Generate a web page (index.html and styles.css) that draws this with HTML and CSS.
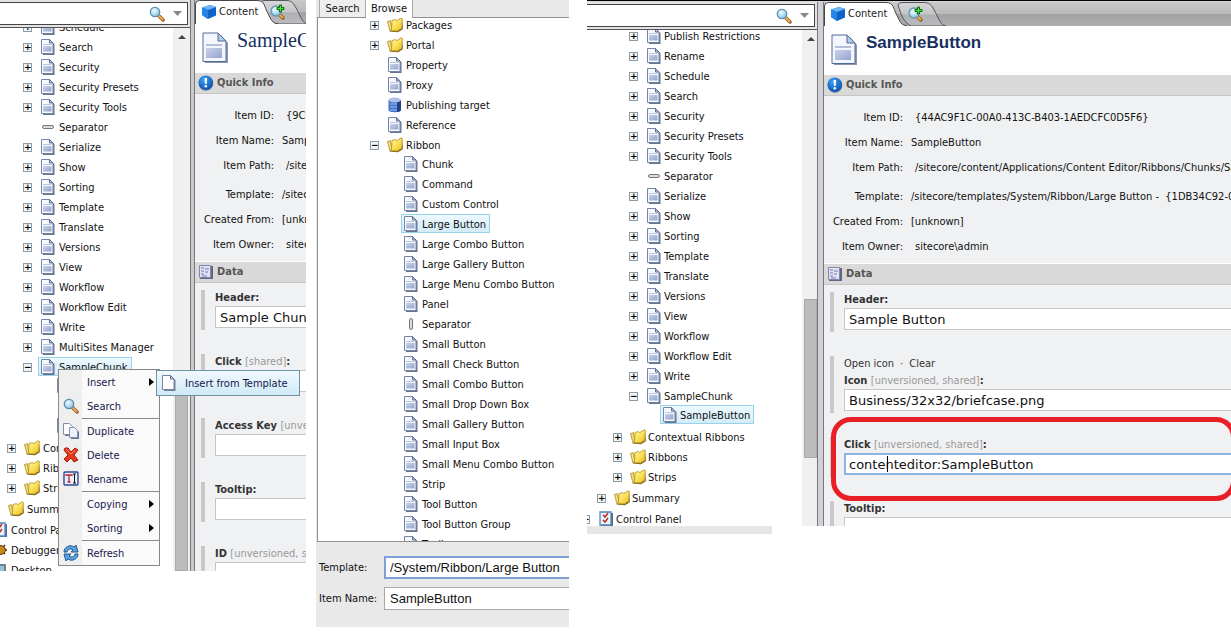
FILE: index.html
```html
<!DOCTYPE html>
<html lang="en">
<head>
<meta charset="utf-8">
<title>Content Editor</title>
<link rel="stylesheet" href="styles.css">
</head>
<body>
<svg class="sprite" width="0" height="0" aria-hidden="true">
  <defs>
    <linearGradient id="gDoc" x1="0" y1="0" x2="1" y2="1"><stop offset="0" stop-color="#c9d3ea"/><stop offset="1" stop-color="#93a4cc"/></linearGradient>
    <linearGradient id="gFold" x1="0" y1="0" x2="1" y2="1"><stop offset="0" stop-color="#fffbb4"/><stop offset=".5" stop-color="#fbe35c"/><stop offset="1" stop-color="#e6bb1c"/></linearGradient>
    <linearGradient id="gTab" x1="0" y1="0" x2="0" y2="1"><stop offset="0" stop-color="#d6d6d8"/><stop offset=".5" stop-color="#c4c5c8"/><stop offset=".52" stop-color="#aeb0b4"/><stop offset="1" stop-color="#b9bbbf"/></linearGradient>
    <radialGradient id="gLens" cx=".4" cy=".35" r=".7"><stop offset="0" stop-color="#f0fbff"/><stop offset="1" stop-color="#7fc0e6"/></radialGradient>
    <radialGradient id="gInfo" cx=".4" cy=".3" r=".8"><stop offset="0" stop-color="#3fa4f5"/><stop offset="1" stop-color="#0447a8"/></radialGradient>
  </defs>
  <symbol id="doc" viewBox="0 0 16 16"><path d="M3 3h9l2.500 2v11H3z" fill="#66748f"/><path d="M1.500.500h8l3.500 3.500v10.500H1.500z" fill="#f7f9fd" stroke="#7485a8"/><path d="M9.500.500v3.500h3.500z" fill="#b9c6de" stroke="#5f7094"/><path d="M3 5.500h8.500" stroke="#b9c5de"/><path d="M3 7h8.500v5.500H3z" fill="url(#gDoc)"/></symbol>
  <symbol id="page" viewBox="0 0 16 16"><path d="M3 3h9l2.500 2v11H3z" fill="#75829a"/><path d="M1.500.500h8l3.500 3.500v10.500H1.500z" fill="#fff" stroke="#7384a6"/><path d="M9.500.500v3.500h3.500z" fill="#dbe3f0" stroke="#5f7094"/></symbol>
  <symbol id="bigdoc" viewBox="0 0 26 32"><path d="M3 3h16l7 8v20H3z" fill="#5b6b8c" opacity=".7"/><path d="M1 1h15l8 8v20.500H1z" fill="#f3f6fc" stroke="#526a96"/><path d="M16 1v8h8z" fill="#aecbe8" stroke="#526a96"/><path d="M4 13h16" stroke="#b4c0db" stroke-width="2"/><path d="M4 16h16v10H4z" fill="url(#gDoc)"/></symbol>
  <symbol id="folder" viewBox="0 0 16 16"><path d="M2 14.500l9 .800 4.800-3V3.500l-1 8z" fill="#7d6320"/><path d="M.500 4.500l3-.800L5 13.500l-2 .500z" fill="#f7e27a" stroke="#a88521" stroke-width=".8"/><path d="M5 3.500l3.500-1 1 1.300 4.500-3 1.300.500-.500 9.700-4.300 3L3 13.500l1.500-1z" fill="url(#gFold)" stroke="#b18d1e" stroke-width=".8"/></symbol>
  <symbol id="sep" viewBox="0 0 16 16"><rect x="2.500" y="6.500" width="11" height="3" rx="1.500" fill="#ddd" stroke="#777"/></symbol>
  <symbol id="vsep" viewBox="0 0 16 16"><rect x="6.500" y="2.500" width="3" height="11" rx="1.500" fill="#ddd" stroke="#777"/></symbol>
  <symbol id="db" viewBox="0 0 16 16"><path d="M1.500 3v10c0 3 12.500 3 12.500 0V3z" fill="#4273cb"/><path d="M10 4h4v9q-1 2-4 2z" fill="#24407f"/><ellipse cx="7.700" cy="3" rx="6.200" ry="2.500" fill="#a9c1ea"/><path d="M3 7h7M3 10h7M3 13h7" stroke="#9fc0f4"/></symbol>
  <symbol id="lens" viewBox="0 0 16 16"><path d="M9 9l5 5" stroke="#8f5b25" stroke-width="3.500" stroke-linecap="round"/><path d="M9 9l4.500 4.500" stroke="#f0a94f" stroke-width="2" stroke-linecap="round"/><circle cx="6" cy="6" r="4.700" fill="url(#gLens)" stroke="#5c8dab" stroke-width="1.300"/></symbol>
  <symbol id="lensplus" viewBox="0 0 18 18"><path d="M9 10l5 5" stroke="#8f5b25" stroke-width="3.500" stroke-linecap="round"/><path d="M10 11l4 4" stroke="#f0a94f" stroke-width="2"/><circle cx="7" cy="8" r="5" fill="url(#gLens)" stroke="#6b96a6" stroke-width="1.300"/><path d="M10.500 2h2v2.500H15v2h-2.500V9h-2V6.500H8v-2h2.500z" fill="#4be03c" stroke="#0a6b10"/></symbol>
  <symbol id="cube" viewBox="0 0 16 16"><path d="M1 3.500L9 1l6 2v8.500L7 15 1 11z" fill="#0f62c8"/><path d="M1 3.500L9 1l6 2-8 3z" fill="#6fb5f5"/><path d="M1 3.500L7 6v9l-6-4z" fill="#2585e6"/></symbol>
  <symbol id="info" viewBox="0 0 16 16"><circle cx="8" cy="8.500" r="7.300" fill="#6d7f99"/><circle cx="7.700" cy="7.700" r="7.200" fill="url(#gInfo)"/><path d="M6.500 3h2.600l-.500 6H7z" fill="#fff"/><circle cx="7.800" cy="11.200" r="1.300" fill="#fff"/></symbol>
  <symbol id="data" viewBox="0 0 16 16"><path d="M2 2h13v13H2z" fill="#616680"/><path d="M1.500 1.500h11v12h-11z" fill="#e2e3f2" stroke="#8386a8"/><path d="M3 4h3M3 7h3M3 10h3M7 5h4M7 8h3M4 12h5" stroke="#7579ae"/></symbol>
  <symbol id="dup" viewBox="0 0 16 16"><path d="M2 2h6l3 3v8H2z" fill="#66758f"/><path d="M.500.500h6l3 3v8h-9z" fill="#fff" stroke="#8091b0"/><path d="M8 6h5l3 3v7H8z" fill="#66758f"/><path d="M6.500 4.500h5l3 3v7h-8z" fill="#eef3fb" stroke="#8091b0"/></symbol>
  <symbol id="del" viewBox="0 0 16 16"><path d="M2 1l3 0 3 4 4-4 3 2-4 5 4 5-4 2-3-4-4 4-3-3 4-4-4-5z" fill="#e8391d" stroke="#a51d0c"/><path d="M3 2l5 5 4-4" stroke="#ff8d70" fill="none"/></symbol>
  <symbol id="ren" viewBox="0 0 16 16"><rect x="1" y="1" width="14" height="13" rx="1" fill="#e8effb" stroke="#2e4b94" stroke-width="1.400"/><path d="M3 5V4h6v1M6 4v7M4.500 11h3" stroke="#b52836" stroke-width="1.300" fill="none"/><path d="M10 3h3M11.500 3v9M10 12h3" stroke="#111"/></symbol>
  <symbol id="ref" viewBox="0 0 16 16"><path d="M1 7C1 2 7-1 11 2l2-2 2 7-7 0 2-2C7 3 5 4 4 7z" fill="#5ba3e0" stroke="#1f5794"/><path d="M15 9c0 5-6 8-10 5l-2 2-2-7 7 0-2 2c3 2 5 1 6-2z" fill="#5ba3e0" stroke="#1f5794"/></symbol>
  <symbol id="cp" viewBox="0 0 16 16"><path d="M3 2h12v13H3z" fill="#55698c"/><path d="M2 1h11v13H2z" fill="#eaf3fd" stroke="#5287b8" stroke-width="1.300"/><path d="M5 4l2 2 3-4M5 9l2 2 3-4" stroke="#c22a1e" stroke-width="1.500" fill="none"/></symbol>
  <symbol id="bug" viewBox="0 0 16 16"><path d="M3 4l10 8M13 3L3 13M1 8h14" stroke="#433010" stroke-width="1.500"/><ellipse cx="8" cy="8" rx="5.500" ry="4.500" fill="#c98718" stroke="#5b3b09"/></symbol>
  <symbol id="desk" viewBox="0 0 16 16"><rect x="1" y="2" width="13" height="11" rx="1" fill="#6e7f8d"/><rect x="3" y="4" width="9" height="7" fill="#9cc3dc"/></symbol>
  <symbol id="tabOn" viewBox="0 0 84 24"><path d="M.500 24V4q0-3.500 4-3.500H62c8 0 7 6 11 13 3 6 4 10 10 10.500z" fill="#fff"/><path d="M.500 24V4q0-3.500 4-3.500H62c8 0 7 6 11 13 3 6 4 10 10 10" fill="none" stroke="#44464a"/></symbol>
  <symbol id="tabOff" viewBox="0 0 54 24"><path d="M1 3q1-2.500 4-2.500h22c7 0 8 4 12 11 3 6 5 12 10 12.500H14C6 20 4 12 1 3z" fill="url(#gTab)" stroke="#55575b"/></symbol>
</svg>

<main class="board">

  <section class="shot editor first">
    <div class="nav">
      <div class="search"><label class="box"><input type="text" aria-label="Search tree"><svg class="ico"><use href="#lens"/></svg><button class="drop" aria-label="Search options"></button></label></div>
      <div class="treewrap">
        <ul class="tree"><li><ul><li><ul><li><ul>
          <li><div class="row"><button class="tog">+</button><svg class="ico"><use href="#doc"/></svg><a href="#">Schedule</a></div></li>
          <li><div class="row"><button class="tog">+</button><svg class="ico"><use href="#doc"/></svg><a href="#">Search</a></div></li>
          <li><div class="row"><button class="tog">+</button><svg class="ico"><use href="#doc"/></svg><a href="#">Security</a></div></li>
          <li><div class="row"><button class="tog">+</button><svg class="ico"><use href="#doc"/></svg><a href="#">Security Presets</a></div></li>
          <li><div class="row"><button class="tog">+</button><svg class="ico"><use href="#doc"/></svg><a href="#">Security Tools</a></div></li>
          <li><div class="row leaf"><svg class="ico"><use href="#sep"/></svg><a href="#">Separator</a></div></li>
          <li><div class="row"><button class="tog">+</button><svg class="ico"><use href="#doc"/></svg><a href="#">Serialize</a></div></li>
          <li><div class="row"><button class="tog">+</button><svg class="ico"><use href="#doc"/></svg><a href="#">Show</a></div></li>
          <li><div class="row"><button class="tog">+</button><svg class="ico"><use href="#doc"/></svg><a href="#">Sorting</a></div></li>
          <li><div class="row"><button class="tog">+</button><svg class="ico"><use href="#doc"/></svg><a href="#">Template</a></div></li>
          <li><div class="row"><button class="tog">+</button><svg class="ico"><use href="#doc"/></svg><a href="#">Translate</a></div></li>
          <li><div class="row"><button class="tog">+</button><svg class="ico"><use href="#doc"/></svg><a href="#">Versions</a></div></li>
          <li><div class="row"><button class="tog">+</button><svg class="ico"><use href="#doc"/></svg><a href="#">View</a></div></li>
          <li><div class="row"><button class="tog">+</button><svg class="ico"><use href="#doc"/></svg><a href="#">Workflow</a></div></li>
          <li><div class="row"><button class="tog">+</button><svg class="ico"><use href="#doc"/></svg><a href="#">Workflow Edit</a></div></li>
          <li><div class="row"><button class="tog">+</button><svg class="ico"><use href="#doc"/></svg><a href="#">Write</a></div></li>
          <li><div class="row"><button class="tog">+</button><svg class="ico"><use href="#doc"/></svg><a href="#">MultiSites Manager</a></div></li>
          <li><div class="row sel"><button class="tog">−</button><svg class="ico"><use href="#doc"/></svg><a href="#">SampleChunk</a></div>
            <ul>
              <li><div class="row leaf"><svg class="ico"><use href="#doc"/></svg></div></li>
              <li><div class="row leaf"><svg class="ico"><use href="#sep"/></svg></div></li>
              <li><div class="row leaf"><svg class="ico"><use href="#doc"/></svg></div></li>
            </ul></li>
        </ul></li>
          <li><div class="row"><button class="tog">+</button><svg class="ico"><use href="#folder"/></svg><a href="#">Contextual Ribbons</a></div></li>
          <li><div class="row"><button class="tog">+</button><svg class="ico"><use href="#folder"/></svg><a href="#">Ribbons</a></div></li>
          <li><div class="row"><button class="tog">+</button><svg class="ico"><use href="#folder"/></svg><a href="#">Strips</a></div></li>
        </ul></li>
          <li><div class="row leaf"><svg class="ico"><use href="#folder"/></svg><a href="#">Summary</a></div></li>
        </ul></li>
          <li><div class="row leaf"><svg class="ico"><use href="#cp"/></svg><a href="#">Control Panel</a></div></li>
          <li><div class="row leaf"><svg class="ico"><use href="#bug"/></svg><a href="#">Debugger</a></div></li>
          <li><div class="row leaf"><svg class="ico"><use href="#desk"/></svg><a href="#">Desktop</a></div></li>
        </ul>
        <div class="scroll"><i class="up"></i><i class="thumb"></i></div>
      </div>
    </div>
    <div class="split"></div>
    <div class="content">
      <div class="tabs">
        <button class="tab on"><svg class="shape"><use href="#tabOn"/></svg><svg class="ico"><use href="#cube"/></svg><span>Content</span></button>
        <button class="tab off" aria-label="Search tab"><svg class="shape"><use href="#tabOff"/></svg><svg class="ico plus"><use href="#lensplus"/></svg></button>
      </div>
      <header class="head"><svg class="big"><use href="#bigdoc"/></svg><h1>SampleChunk</h1></header>
      <h2 class="bar"><svg class="ico"><use href="#info"/></svg>Quick Info</h2>
      <table class="info">
        <tr><th>Item ID:</th><td class="in">{9C0</td></tr>
        <tr><th>Item Name:</th><td>SampleChunk</td></tr>
        <tr><th>Item Path:</th><td class="in">/sitecore</td></tr>
        <tr class="far"><th>Template:</th><td>/sitecore</td></tr>
        <tr><th>Created From:</th><td>[unknown]</td></tr>
        <tr><th>Item Owner:</th><td class="in">sitecore\admin</td></tr>
      </table>
      <h2 class="bar line"><svg class="ico"><use href="#data"/></svg>Data</h2>
      <div class="fields">
        <div class="field"><label for="a1">Header:</label><input id="a1" type="text" value="Sample Chunk"></div>
        <div class="field"><label for="a2">Click <small>[shared]</small>:</label><input id="a2" type="text"></div>
        <div class="field"><label for="a3">Access Key <small>[unversioned, shared]</small>:</label><input id="a3" type="text"></div>
        <div class="field"><label for="a4">Tooltip:</label><input id="a4" type="text"></div>
        <div class="field"><label for="a5">ID <small>[unversioned, shared]</small>:</label><input id="a5" type="text"></div>
      </div>
    </div>
    <div class="menu" role="menu">
      <button class="item more" role="menuitem"><span>Insert</span></button>
      <button class="item" role="menuitem"><svg class="ico"><use href="#lens"/></svg><span>Search</span></button>
      <hr>
      <button class="item" role="menuitem"><svg class="ico"><use href="#dup"/></svg><span>Duplicate</span></button>
      <button class="item" role="menuitem"><svg class="ico"><use href="#del"/></svg><span>Delete</span></button>
      <button class="item" role="menuitem"><svg class="ico"><use href="#ren"/></svg><span>Rename</span></button>
      <hr>
      <button class="item more" role="menuitem"><span>Copying</span></button>
      <button class="item more" role="menuitem"><span>Sorting</span></button>
      <hr>
      <button class="item" role="menuitem"><svg class="ico"><use href="#ref"/></svg><span>Refresh</span></button>
      <button class="submenu" role="menuitem"><svg class="ico"><use href="#page"/></svg><span>Insert from Template</span></button>
    </div>
  </section>

  <section class="shot picker">
    <div class="ptabs"><button class="ptab">Search</button><button class="ptab on">Browse</button></div>
    <div class="pbox">
      <ul class="tree">
        <li><div class="row"><button class="tog">+</button><svg class="ico"><use href="#folder"/></svg><a href="#">Packages</a></div></li>
        <li><div class="row"><button class="tog">+</button><svg class="ico"><use href="#folder"/></svg><a href="#">Portal</a></div></li>
        <li><div class="row leaf"><svg class="ico"><use href="#doc"/></svg><a href="#">Property</a></div></li>
        <li><div class="row leaf"><svg class="ico"><use href="#doc"/></svg><a href="#">Proxy</a></div></li>
        <li><div class="row leaf"><svg class="ico"><use href="#db"/></svg><a href="#">Publishing target</a></div></li>
        <li><div class="row leaf"><svg class="ico"><use href="#doc"/></svg><a href="#">Reference</a></div></li>
        <li><div class="row"><button class="tog">−</button><svg class="ico"><use href="#folder"/></svg><a href="#">Ribbon</a></div>
          <ul>
            <li><div class="row leaf"><svg class="ico"><use href="#doc"/></svg><a href="#">Chunk</a></div></li>
            <li><div class="row leaf"><svg class="ico"><use href="#doc"/></svg><a href="#">Command</a></div></li>
            <li><div class="row leaf"><svg class="ico"><use href="#doc"/></svg><a href="#">Custom Control</a></div></li>
            <li><div class="row leaf sel"><svg class="ico"><use href="#doc"/></svg><a href="#">Large Button</a></div></li>
            <li><div class="row leaf"><svg class="ico"><use href="#doc"/></svg><a href="#">Large Combo Button</a></div></li>
            <li><div class="row leaf"><svg class="ico"><use href="#doc"/></svg><a href="#">Large Gallery Button</a></div></li>
            <li><div class="row leaf"><svg class="ico"><use href="#doc"/></svg><a href="#">Large Menu Combo Button</a></div></li>
            <li><div class="row leaf"><svg class="ico"><use href="#doc"/></svg><a href="#">Panel</a></div></li>
            <li><div class="row leaf"><svg class="ico"><use href="#vsep"/></svg><a href="#">Separator</a></div></li>
            <li><div class="row leaf"><svg class="ico"><use href="#doc"/></svg><a href="#">Small Button</a></div></li>
            <li><div class="row leaf"><svg class="ico"><use href="#doc"/></svg><a href="#">Small Check Button</a></div></li>
            <li><div class="row leaf"><svg class="ico"><use href="#doc"/></svg><a href="#">Small Combo Button</a></div></li>
            <li><div class="row leaf"><svg class="ico"><use href="#doc"/></svg><a href="#">Small Drop Down Box</a></div></li>
            <li><div class="row leaf"><svg class="ico"><use href="#doc"/></svg><a href="#">Small Gallery Button</a></div></li>
            <li><div class="row leaf"><svg class="ico"><use href="#doc"/></svg><a href="#">Small Input Box</a></div></li>
            <li><div class="row leaf"><svg class="ico"><use href="#doc"/></svg><a href="#">Small Menu Combo Button</a></div></li>
            <li><div class="row leaf"><svg class="ico"><use href="#doc"/></svg><a href="#">Strip</a></div></li>
            <li><div class="row leaf"><svg class="ico"><use href="#doc"/></svg><a href="#">Tool Button</a></div></li>
            <li><div class="row leaf"><svg class="ico"><use href="#doc"/></svg><a href="#">Tool Button Group</a></div></li>
            <li><div class="row leaf"><svg class="ico"><use href="#doc"/></svg><a href="#">Toolbar</a></div></li>
          </ul></li>
      </ul>
    </div>
    <form class="pform">
      <label for="p1">Template:</label><input id="p1" class="focus" type="text" value="/System/Ribbon/Large Button">
      <label for="p2">Item Name:</label><input id="p2" type="text" value="SampleButton">
    </form>
  </section>

  <div class="third">
  <section class="shot editor second">
    <div class="nav">
      <div class="search"><label class="box"><input type="text" aria-label="Search tree"><svg class="ico"><use href="#lens"/></svg><button class="drop" aria-label="Search options"></button></label></div>
      <div class="treewrap">
        <ul class="tree"><li><ul><li><ul><li><ul>
          <li><div class="row"><button class="tog">+</button><svg class="ico"><use href="#doc"/></svg><a href="#">Publish Restrictions</a></div></li>
          <li><div class="row"><button class="tog">+</button><svg class="ico"><use href="#doc"/></svg><a href="#">Rename</a></div></li>
          <li><div class="row"><button class="tog">+</button><svg class="ico"><use href="#doc"/></svg><a href="#">Schedule</a></div></li>
          <li><div class="row"><button class="tog">+</button><svg class="ico"><use href="#doc"/></svg><a href="#">Search</a></div></li>
          <li><div class="row"><button class="tog">+</button><svg class="ico"><use href="#doc"/></svg><a href="#">Security</a></div></li>
          <li><div class="row"><button class="tog">+</button><svg class="ico"><use href="#doc"/></svg><a href="#">Security Presets</a></div></li>
          <li><div class="row"><button class="tog">+</button><svg class="ico"><use href="#doc"/></svg><a href="#">Security Tools</a></div></li>
          <li><div class="row leaf"><svg class="ico"><use href="#sep"/></svg><a href="#">Separator</a></div></li>
          <li><div class="row"><button class="tog">+</button><svg class="ico"><use href="#doc"/></svg><a href="#">Serialize</a></div></li>
          <li><div class="row"><button class="tog">+</button><svg class="ico"><use href="#doc"/></svg><a href="#">Show</a></div></li>
          <li><div class="row"><button class="tog">+</button><svg class="ico"><use href="#doc"/></svg><a href="#">Sorting</a></div></li>
          <li><div class="row"><button class="tog">+</button><svg class="ico"><use href="#doc"/></svg><a href="#">Template</a></div></li>
          <li><div class="row"><button class="tog">+</button><svg class="ico"><use href="#doc"/></svg><a href="#">Translate</a></div></li>
          <li><div class="row"><button class="tog">+</button><svg class="ico"><use href="#doc"/></svg><a href="#">Versions</a></div></li>
          <li><div class="row"><button class="tog">+</button><svg class="ico"><use href="#doc"/></svg><a href="#">View</a></div></li>
          <li><div class="row"><button class="tog">+</button><svg class="ico"><use href="#doc"/></svg><a href="#">Workflow</a></div></li>
          <li><div class="row"><button class="tog">+</button><svg class="ico"><use href="#doc"/></svg><a href="#">Workflow Edit</a></div></li>
          <li><div class="row"><button class="tog">+</button><svg class="ico"><use href="#doc"/></svg><a href="#">Write</a></div></li>
          <li><div class="row"><button class="tog">−</button><svg class="ico"><use href="#doc"/></svg><a href="#">SampleChunk</a></div>
            <ul><li><div class="row leaf sel"><svg class="ico"><use href="#doc"/></svg><a href="#">SampleButton</a></div></li></ul></li>
        </ul></li>
          <li><div class="row"><button class="tog">+</button><svg class="ico"><use href="#folder"/></svg><a href="#">Contextual Ribbons</a></div></li>
          <li><div class="row"><button class="tog">+</button><svg class="ico"><use href="#folder"/></svg><a href="#">Ribbons</a></div></li>
          <li><div class="row"><button class="tog">+</button><svg class="ico"><use href="#folder"/></svg><a href="#">Strips</a></div></li>
        </ul></li>
          <li><div class="row"><button class="tog">+</button><svg class="ico"><use href="#folder"/></svg><a href="#">Summary</a></div></li>
        </ul></li>
          <li><div class="row"><button class="tog">+</button><svg class="ico"><use href="#cp"/></svg><a href="#">Control Panel</a></div></li>
        </ul>
        <div class="scroll"><i class="up"></i><i class="thumb"></i></div>
      </div>
    </div>
    <div class="split"></div>
    <div class="content">
      <div class="tabs">
        <button class="tab on"><svg class="shape"><use href="#tabOn"/></svg><svg class="ico"><use href="#cube"/></svg><span>Content</span></button>
        <button class="tab off" aria-label="Search tab"><svg class="shape"><use href="#tabOff"/></svg><svg class="ico plus"><use href="#lensplus"/></svg></button>
      </div>
      <header class="head"><svg class="big"><use href="#bigdoc"/></svg><h1>SampleButton</h1></header>
      <h2 class="bar"><svg class="ico"><use href="#info"/></svg>Quick Info</h2>
      <table class="info">
        <tr><th>Item ID:</th><td class="in">{44AC9F1C-00A0-413C-B403-1AEDCFC0D5F6}</td></tr>
        <tr><th>Item Name:</th><td>SampleButton</td></tr>
        <tr><th>Item Path:</th><td class="in">/sitecore/content/Applications/Content Editor/Ribbons/Chunks/SampleChunk</td></tr>
        <tr class="far"><th>Template:</th><td>/sitecore/templates/System/Ribbon/Large Button -&nbsp; {1DB34C92-03</td></tr>
        <tr><th>Created From:</th><td>[unknown]</td></tr>
        <tr><th>Item Owner:</th><td class="in">sitecore\admin</td></tr>
      </table>
      <h2 class="bar line"><svg class="ico"><use href="#data"/></svg>Data</h2>
      <div class="fields">
        <div class="field"><label for="b1">Header:</label><input id="b1" type="text" value="Sample Button"></div>
        <div class="field"><div class="acts"><a href="#">Open icon</a><span>·</span><a href="#">Clear</a></div><label for="b2">Icon <small>[unversioned, shared]</small>:</label><input id="b2" type="text" value="Business/32x32/briefcase.png"></div>
        <div class="field marked"><label for="b3">Click <small>[unversioned, shared]</small>:</label><input id="b3" class="focus" type="text" value="contenteditor:SampleButton"><i class="caret"></i><i class="ring"></i></div>
        <div class="field"><label for="b4">Tooltip:</label><input id="b4" type="text"></div>
      </div>
    </div>
  </section>
  <div class="foot"></div>
  </div>
</main>
</body>
</html>
```
FILE: styles.css
```css
* { box-sizing: border-box; }
body {
  margin: 0;
  background: #fff;
  color: #111;
  font: 11px/20px "DejaVu Sans Condensed", "Noto Sans", sans-serif;
  overflow: hidden;
}
ul { list-style: none; margin: 0; padding: 0; }
a { color: inherit; text-decoration: none; white-space: nowrap; }
button, input { font: inherit; color: inherit; border: 0; padding: 0; margin: 0; background: none; border-radius: 0; outline: 0; }
.sprite { position: absolute; }
.ico { width: 16px; height: 16px; flex: none; }

.board {
  display: grid;
  grid-template-columns: minmax(0, 306fr) minmax(0, 253fr) minmax(0, 644fr);
  align-items: start;
  height: 100vh;
  padding-right: 28px;
}
.shot { overflow: hidden; position: relative; }
.editor { display: flex; }
.first { height: calc(100vh - 64px); }
.second { height: calc(100vh - 109px); border-top: 1px solid #000; padding-top: 1px; background: #d6d6da; }
.picker { margin-left: 10px; margin-right: -10px; }
.third { margin-left: 28px; margin-right: -28px; }
.foot { width: 185px; height: 8px; background: #e6e6e6; }

/* Navigation */
.nav { display: flex; flex-direction: column; flex: none; width: 190px; }
.second .nav { width: 230px; }
.search { background: #e4e4e6; padding: 2px 2px 2px 0; height: 28px; border-bottom: 1px solid #555; }
.box { display: flex; align-items: center; height: 23px; background: #fff; border: 1px solid #444; border-left: 0; padding-right: 5px; }
.box input { flex: 1; min-width: 0; height: 18px; }
.drop { width: 9px; height: 5px; margin-left: 8px; background: #888; clip-path: polygon(0 0, 100% 0, 50% 100%); }
.treewrap { display: flex; flex: 1; min-height: 0; background: #fff; overflow: hidden; }
.tree { flex: 1; min-width: 0; margin-left: -25px; }
.first .tree { margin-top: -11px; }
.second .tree { margin-left: -6px; margin-top: -4px; }
.tree ul { padding-left: 16px; padding-bottom: 1px; }
.tree .row + ul { margin-top: -1px; }
.row { display: flex; align-items: center; height: 20px; position: relative; z-index: 0; }
.leaf { padding-left: 17px; }
.tog {
  width: 9px; height: 9px; flex: none; margin-right: 8px;
  border: 1px solid #8c9ba8; background: #f2f4f4; color: #000;
  font: bold 9px/7px "DejaVu Sans", sans-serif; text-align: center;
}
.row a { padding: 1px 4px 0 3px; }
.second .row a { padding-left: 2px; }
.sel { width: max-content; }
.sel::before {
  content: ""; position: absolute; z-index: -1; top: 0; bottom: 1px; left: 15px; right: 0;
  border: 1px solid #99d3e8; background: linear-gradient(#eef9fe, #d3ecf8);
}
.scroll { flex: none; width: 17px; background: #f0f0f0; position: relative; }
.second .scroll { width: 15px; }
.up { position: absolute; top: 7px; left: 5px; border: 4px solid transparent; border-top: 0; border-bottom-color: #444; }
.thumb { position: absolute; left: 2px; right: 2px; top: 350px; bottom: 0; background: #bcbcbc; border: 1px solid #aaa; }
.second .thumb { top: 269px; bottom: 68px; right: 0; }
.split { flex: none; width: 5px; background: #c9c9cc; border-left: 1px solid #777; border-right: 1px solid #777; }
.second .split { width: 7px; background: #d0d0d6; }

/* Content pane */
.content { flex: 1; min-width: 0; background: #f0f1f3; overflow: hidden; }
.tabs { display: flex; height: 24px; background: linear-gradient(#c9c9c9, #b9b9b9 50%, #a3a3a3 52%, #adadad); }
.tab { position: relative; z-index: 1; display: flex; align-items: center; width: 73px; height: 24px; padding-left: 6px; }
.tab.on { z-index: 2; }
.tab span { padding-left: 2px; color: #222; }
.shape { position: absolute; z-index: -1; left: 0; top: 0; width: 84px; height: 24px; }
.tab.off { width: 54px; }
.tab.off .shape { width: 54px; }
.plus { width: 18px; height: 18px; margin-left: 4px; }
.head { display: flex; height: 49px; background: #fff; padding: 8px 7px; gap: 9px; }
.big { width: 26px; height: 32px; flex: none; }
h1 { margin: 0; color: #17305f; font: 20px/16px "Liberation Serif", serif; }
.second h1 { font: bold 17px/18px "Liberation Sans", sans-serif; }
.bar {
  display: flex; align-items: center; gap: 3px; margin: 0; height: 21px; padding-left: 3px;
  background: #d9d9d9; border-bottom: 1px solid #c6c6c6; color: #555;
  font: bold 11px/20px "DejaVu Sans Condensed", sans-serif;
}
.line { border-top: 1px solid #fff; height: 22px; }
.info { border-spacing: 0; margin: 9px 0 4px; white-space: nowrap; }
.info th { min-width: 79px; height: 25px; padding: 0; text-align: right; font-weight: normal; }
.info td { padding: 0 0 0 8px; }
.info td.in { padding-left: 12px; }
.info .far th { height: 29px; padding-top: 4px; }
.info .far td { padding-top: 4px; }
.fields { display: flex; flex-direction: column; gap: 24px; padding: 7px 0 0 6px; }
.field { border-left: 4px solid #c9c9c9; padding-left: 10px; position: relative; white-space: nowrap; padding-bottom: 2px; }
.field label { display: block; height: 16px; line-height: 16px; font-weight: bold; color: #333; }
.field small { font-size: 11px; font-weight: normal; color: #999; }
.field input { display: block; width: 100%; height: 22px; background: #fff; border: 1px solid #c6c6c6; border-right: 0; padding-left: 4px; font: 13px/20px "DejaVu Sans", sans-serif; }
.field input.focus { border: 2px solid #8fb2e4; border-right: 0; padding-left: 3px; }
.acts { display: flex; gap: 6px; height: 17px; line-height: 16px; color: #333; }
.marked { z-index: 1; }
.caret { position: absolute; left: 53px; top: 19px; width: 1px; height: 16px; background: #000; }
.ring { position: absolute; left: -3px; right: -5px; top: -20px; bottom: -24px; border: 5px solid #e81f27; border-radius: 20px; }

/* Context menu */
.menu { position: absolute; left: 58px; top: 369px; width: 102px; border: 1px solid #888; background: linear-gradient(90deg, #efefef 23px, #fafafa 23px); color: #17174a; }
.menu hr { border: 0; height: 1px; margin: 0 0 0 23px; background: #8a8a8a; }
.item { display: flex; align-items: center; width: 100%; height: 24px; padding-left: 28px; }
.item .ico { margin: 0 8px 0 -24px; }
.item span, .submenu span { padding-top: 1px; }
.more::after { content: ""; margin-left: auto; margin-right: 5px; border: 4px solid transparent; border-left: 5px solid #000; border-right: 0; }
.submenu { position: absolute; left: 97px; top: 0; height: 26px; width: 144px; display: flex; align-items: center; gap: 8px; padding-left: 4px; border: 1px solid #6f93a5; background: linear-gradient(#eff9fd, #cfeaf7); white-space: nowrap; }

/* Template picker */
.picker { background: #e9e9e9; }
.ptabs { display: flex; height: 17px; padding-left: 3px; }
.ptab { width: 47px; border: 1px solid #aaa; border-top: 0; border-bottom: 0; background: #eee; line-height: 15px; }
.ptab.on { background: #fff; height: 18px; border-left: 0; padding-bottom: 2px; position: relative; z-index: 1; }
.pbox { border: 1px solid #909090; border-right: 0; margin-left: 1px; height: calc(100vh - 110px); overflow: hidden; background: #fff; }
.pbox .tree { margin: -3px 0 0 52px; }
.pform { display: grid; grid-template-columns: 65px minmax(0, 1fr); align-items: center; row-gap: 8px; padding: 14px 0 17px 3px; }
.pform input { height: 23px; width: 100%; background: #fff; border: 1px solid #aaa; border-right: 0; padding-left: 5px; font: 13px/20px "Liberation Sans", sans-serif; }
.pform input.focus { border: 2px solid #7f9fd6; border-right: 0; padding-left: 4px; }
```
